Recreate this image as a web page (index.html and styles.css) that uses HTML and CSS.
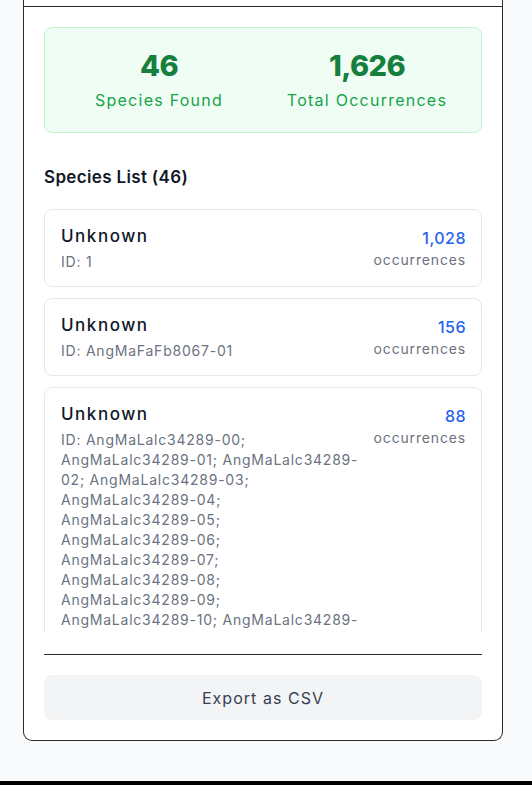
FILE: index.html
```html
<!DOCTYPE html>
<html lang="en">
<head>
<meta charset="utf-8">
<title>Species Summary</title>
<link rel="stylesheet" href="styles.css">
</head>
<body>
<div class="page">
  <div class="card">
    <div class="card-header"></div>
    <div class="card-body">
      <div class="stats">
        <div class="stat">
          <div class="stat-value">46</div>
          <div class="stat-label">Species Found</div>
        </div>
        <div class="stat">
          <div class="stat-value">1,626</div>
          <div class="stat-label">Total Occurrences</div>
        </div>
      </div>

      <h2 class="list-title">Species List (46)</h2>

      <div class="species-list">
        <div class="species-item">
          <div class="species-info">
            <div class="species-name">Unknown</div>
            <div class="species-id">ID: 1</div>
          </div>
          <div class="species-count">
            <div class="count-value">1,028</div>
            <div class="count-label">occurrences</div>
          </div>
        </div>
        <div class="species-item">
          <div class="species-info">
            <div class="species-name">Unknown</div>
            <div class="species-id">ID: AngMaFaFb8067-01</div>
          </div>
          <div class="species-count">
            <div class="count-value">156</div>
            <div class="count-label">occurrences</div>
          </div>
        </div>
        <div class="species-item">
          <div class="species-info">
            <div class="species-name">Unknown</div>
            <div class="species-id ids">ID: AngMaLalc34289-00;<br>AngMaLalc34289-01; AngMaLalc34289-<br>02; AngMaLalc34289-03;<br>AngMaLalc34289-04;<br>AngMaLalc34289-05;<br>AngMaLalc34289-06;<br>AngMaLalc34289-07;<br>AngMaLalc34289-08;<br>AngMaLalc34289-09;<br>AngMaLalc34289-10; AngMaLalc34289-<br>11; AngMaLalc34289-12;<br>AngMaLalc34289-13;<br>AngMaLalc34289-14</div>
          </div>
          <div class="species-count">
            <div class="count-value">88</div>
            <div class="count-label">occurrences</div>
          </div>
        </div>
        <div class="species-item">
          <div class="species-info">
            <div class="species-name">Unknown</div>
            <div class="species-id">ID: AngMaLalc34290-01</div>
          </div>
          <div class="species-count">
            <div class="count-value">42</div>
            <div class="count-label">occurrences</div>
          </div>
        </div>
      </div>

      <div class="card-footer">
        <button class="export-btn" type="button">Export as CSV</button>
      </div>
    </div>
  </div>
  <div class="bottom-bar"></div>
</div>
</body>
</html>
```

FILE: styles.css
```css
* {
  box-sizing: border-box;
}

html, body {
  margin: 0;
  padding: 0;
}

body {
  background: #f8fafc;
  font-family: Inter, "Noto Sans", "DejaVu Sans", sans-serif;
  color: #111827;
  overflow: hidden;
}

.page {
  height: 785px;
  display: flex;
  flex-direction: column;
}

.card {
  width: 480px;
  margin-left: 23px;
  background: #ffffff;
  border: 1px solid #2a2a2a;
  border-top: none;
  border-radius: 0 0 9px 9px;
}

.card-header {
  height: 7px;
  border-bottom: 1px solid #2a2a2a;
}

.card-body {
  padding: 20px;
}

.stats {
  display: grid;
  grid-template-columns: 1fr 1fr;
  column-gap: 12px;
  padding: 20px 16px;
  background: #f0fdf4;
  border: 1px solid #bbf7d0;
  border-radius: 8px;
  text-align: center;
}

.stat-value {
  font-size: 29px;
  line-height: 36px;
  font-weight: 800;
  color: #15803d;
  letter-spacing: -0.02em;
}

.stat-label {
  margin-top: 4px;
  font-size: 16px;
  line-height: 24px;
  color: #16a34a;
  letter-spacing: 0.078em;
}

.list-title {
  margin: 30px 0 18px;
  font-size: 17px;
  line-height: 28px;
  font-weight: 600;
  color: #111827;
  letter-spacing: 0.02em;
}

.species-list {
  height: 424px;
  overflow-y: auto;
  scrollbar-width: none;
  display: flex;
  flex-direction: column;
  gap: 11px;
}

.species-item {
  flex-shrink: 0;
  display: flex;
  justify-content: space-between;
  align-items: flex-start;
  gap: 16px;
  padding: 14px 16px;
  border: 1px solid #e5e7eb;
  border-radius: 8px;
  background: #ffffff;
}

.species-info {
  min-width: 0;
}

.species-name {
  font-size: 17px;
  line-height: 24px;
  font-weight: 500;
  color: #111827;
  letter-spacing: 0.09em;
}

.species-id {
  margin-top: 4px;
  font-size: 14px;
  line-height: 20px;
  color: #6b7280;
  letter-spacing: 0.055em;
}

.ids {
  white-space: nowrap;
}

.species-count {
  flex-shrink: 0;
  padding-top: 2px;
  margin-right: -1px;
  text-align: right;
}

.count-value {
  font-size: 16px;
  line-height: 24px;
  font-weight: 500;
  color: #2563eb;
  letter-spacing: 0.03em;
}

.count-label {
  font-size: 14px;
  line-height: 20px;
  color: #6b7280;
  letter-spacing: 0.06em;
}

.card-footer {
  margin-top: 21px;
  padding-top: 20px;
  border-top: 1px solid #2a2a2a;
}

.export-btn {
  display: flex;
  align-items: center;
  justify-content: center;
  width: 100%;
  height: 45px;
  padding: 0;
  border: none;
  border-radius: 8px;
  background: #f3f4f6;
  font-family: inherit;
  font-size: 16px;
  color: #374151;
  letter-spacing: 0.065em;
  cursor: pointer;
}

.bottom-bar {
  margin-top: auto;
  height: 4px;
  background: #000000;
}
```
